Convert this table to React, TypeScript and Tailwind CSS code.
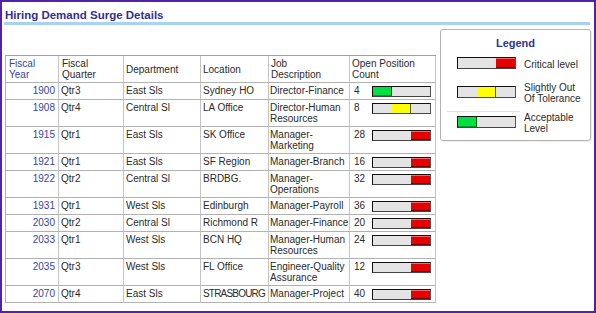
type Level = 'green' | 'yellow' | 'red';

interface Row {
  year: number;
  qtr: string;
  dept: string;
  loc: string;
  job: string[];
  count: number;
  level: Level;
}

const rows: Row[] = [
  { year: 1900, qtr: 'Qtr3', dept: 'East Sls', loc: 'Sydney HO', job: ['Director-Finance'], count: 4, level: 'green' },
  { year: 1908, qtr: 'Qtr4', dept: 'Central Sl', loc: 'LA Office', job: ['Director-Human', 'Resources'], count: 8, level: 'yellow' },
  { year: 1915, qtr: 'Qtr1', dept: 'East Sls', loc: 'SK Office', job: ['Manager-', 'Marketing'], count: 28, level: 'red' },
  { year: 1921, qtr: 'Qtr1', dept: 'East Sls', loc: 'SF Region', job: ['Manager-Branch'], count: 16, level: 'red' },
  { year: 1922, qtr: 'Qtr2', dept: 'Central Sl', loc: 'BRDBG.', job: ['Manager-', 'Operations'], count: 32, level: 'red' },
  { year: 1931, qtr: 'Qtr1', dept: 'West Sls', loc: 'Edinburgh', job: ['Manager-Payroll'], count: 36, level: 'red' },
  { year: 2030, qtr: 'Qtr2', dept: 'Central Sl', loc: 'Richmond R', job: ['Manager-Finance'], count: 20, level: 'red' },
  { year: 2033, qtr: 'Qtr1', dept: 'West Sls', loc: 'BCN HQ', job: ['Manager-Human', 'Resources'], count: 24, level: 'red' },
  { year: 2035, qtr: 'Qtr3', dept: 'West Sls', loc: 'FL Office', job: ['Engineer-Quality', 'Assurance'], count: 12, level: 'red' },
  { year: 2070, qtr: 'Qtr4', dept: 'East Sls', loc: 'STRASBOURG', job: ['Manager-Project'], count: 40, level: 'red' },
];

function Bar({ level, h }: { level: Level; h: string }) {
  return (
    <div
      className={`flex w-[59px] shrink-0 ${h} border border-t-[#111] border-l-[#111] border-r-[#555] border-b-[#444] bg-[#e4e4e4]`}
    >
      {level === 'green' && (
        <div className="w-[19px] bg-[#00e040] border-r border-r-[#005a10] border-b border-b-[#00a030]" />
      )}
      {level === 'yellow' && (
        <>
          <div className="w-[19px]" />
          <div className="w-[19px] bg-[#ffff00] border-r border-r-[#5a5a00]" />
        </>
      )}
      {level === 'red' && (
        <>
          <div className="w-[38px]" />
          <div className="flex-1 bg-[#e60000] border-t border-t-[#f56a6a] border-b border-b-[#6a0000]" />
        </>
      )}
    </div>
  );
}

const cell = 'border-r border-b border-r-[#c4c4c4] border-b-[#b2b2b2]';

export default function App() {
  return (
    <div
      className="w-[596px] h-[313px] border-2 border-[#5223a8] bg-white px-[2px] text-[10px] text-[#2a2a2a] overflow-hidden"
      style={{ fontFamily: '"Liberation Sans", Arial, sans-serif' }}
    >
      {/* Title */}
      <div className="pt-[6px] pl-[1px] leading-[14px] text-[11.5px] font-bold text-[#33308e]">
        Hiring Demand Surge Details
      </div>
      <div className="h-[3px] mr-[2px] bg-[#a9d2f2]" />

      <div className="flex items-start">
        {/* Table */}
        <div className="ml-[1px] mt-[30px] grid grid-cols-[53px_65px_77px_68px_81px_86px] border-l border-t border-l-[#b2b2b2] border-t-[#a0a0a0] leading-[11px]">
          <div className={`${cell} h-[27px] flex items-center pl-[3px] text-[#3545a5]`}>
            Fiscal<br />Year
          </div>
          <div className={`${cell} h-[27px] flex items-center pl-[3px]`}>
            Fiscal<br />Quarter
          </div>
          <div className={`${cell} h-[27px] flex items-center pl-[2px]`}>Department</div>
          <div className={`${cell} h-[27px] flex items-center pl-[2px]`}>Location</div>
          <div className={`${cell} h-[27px] flex items-center pl-[2px]`}>
            Job<br />Description
          </div>
          <div className={`${cell} h-[27px] flex items-center pl-[2px]`}>
            Open Position<br />Count
          </div>

          {rows.map((r) => {
            const h = r.job.length > 1 ? 'h-[27px]' : 'h-[17px]';
            return (
              <div key={r.year} className="contents">
                <div className={`${cell} ${h} pt-[2px] pr-[3px] text-right text-[#3545a5]`}>{r.year}</div>
                <div className={`${cell} ${h} pt-[2px] pl-[2px]`}>{r.qtr}</div>
                <div className={`${cell} ${h} pt-[2px] pl-[2px]`}>{r.dept}</div>
                <div
                  className={`${cell} ${h} pt-[2px] pl-[2px] whitespace-nowrap ${
                    r.loc === 'STRASBOURG' ? 'tracking-[-0.8px]' : ''
                  }`}
                >
                  {r.loc}
                </div>
                <div className={`${cell} ${h} pt-[2px] pl-[1px] whitespace-nowrap`}>
                  {r.job.map((line, i) => (
                    <div key={i}>{line}</div>
                  ))}
                </div>
                <div className={`${cell} ${h} pt-[2px] pl-[4px] flex items-start`}>
                  <span className="w-[18px] shrink-0">{r.count}</span>
                  <div className="mt-[1px]">
                    <Bar level={r.level} h="h-[11px]" />
                  </div>
                </div>
              </div>
            );
          })}
        </div>

        {/* Legend */}
        <div className="ml-[4px] mt-[4px] w-[151px] h-[112px] border border-[#b4b4b4] rounded-[3px] shadow-[1px_1px_1px_rgba(0,0,0,0.08)] flex flex-col">
          <div className="pt-[7px] leading-[13px] text-center text-[11px] font-bold text-[#2b3592]">
            Legend
          </div>
          <div className="mt-[7px] pl-[16px] flex items-start gap-[8px]">
            <Bar level="red" h="h-[12px]" />
            <div className="mt-[2px] leading-[11px]">Critical level</div>
          </div>
          <div className="mt-[12px] pl-[16px] flex items-start gap-[8px]">
            <div className="mt-[4px]">
              <Bar level="yellow" h="h-[12px]" />
            </div>
            <div className="leading-[11px]">
              Slightly Out<br />Of Tolerance
            </div>
          </div>
          <div className="mt-[7px] ml-[6px] w-[73px] h-px bg-[#e2e2e2]" />
          <div className="pl-[16px] flex items-start gap-[8px]">
            <div className="mt-[4px]">
              <Bar level="green" h="h-[12px]" />
            </div>
            <div className="leading-[11px]">
              Acceptable<br />Level
            </div>
          </div>
        </div>
      </div>
    </div>
  );
}
